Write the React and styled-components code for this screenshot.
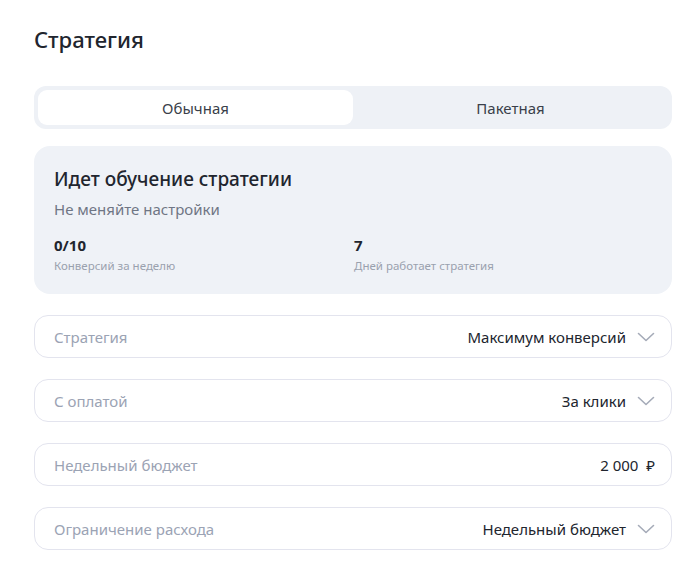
import React from 'react';
import styled, { createGlobalStyle } from 'styled-components';

const Global = createGlobalStyle`
  body {
    margin: 0;
    background: #ffffff;
    font-family: 'Noto Sans', 'Open Sans', sans-serif;
    color: #21252e;
  }
`;

const Page = styled.div`
  width: 699px;
  padding: 24px 27px 0 34px;
  box-sizing: border-box;
`;

const Title = styled.h1`
  margin: 0 0 32px;
  font-size: 22px;
  font-weight: 500;
  line-height: 30px;
  color: #21252e;
`;

const Tabs = styled.div`
  display: grid;
  grid-template-columns: 1fr 1fr;
  padding: 4px;
  background: #eef1f6;
  border-radius: 12px;
  margin-bottom: 17px;
`;

const Tab = styled.div`
  height: 35px;
  display: flex;
  align-items: center;
  justify-content: center;
  font-size: 15px;
  color: #3a3f4a;
  border-radius: 9px;
  background: ${p => (p.active ? '#ffffff' : 'transparent')};
`;

const InfoCard = styled.div`
  background: #eff2f7;
  border-radius: 16px;
  padding: 21px 20px 21px;
  margin-bottom: 21px;
`;

const InfoTitle = styled.div`
  font-size: 19px;
  font-weight: 500;
  line-height: 24px;
  color: #21252e;
`;

const InfoSub = styled.div`
  margin-top: 8px;
  font-size: 15px;
  line-height: 20px;
  color: #6f7685;
`;

const Stats = styled.div`
  display: grid;
  grid-template-columns: 300px 1fr;
  margin-top: 17px;
`;

const StatValue = styled.div`
  font-size: 15px;
  font-weight: 700;
  line-height: 18px;
  color: #21252e;
`;

const StatLabel = styled.div`
  margin-top: 5px;
  font-size: 11.5px;
  line-height: 14px;
  color: #9aa1ae;
`;

const Fields = styled.div`
  display: flex;
  flex-direction: column;
  gap: 21px;
`;

const Field = styled.div`
  height: 43px;
  box-sizing: border-box;
  border: 1px solid #e3e4ee;
  border-radius: 14px;
  display: flex;
  align-items: center;
  justify-content: space-between;
  padding: 0 16px 0 19px;
`;

const Label = styled.span`
  font-size: 15px;
  color: #9ba3b4;
`;

const Value = styled.span`
  display: flex;
  align-items: center;
  gap: 11px;
  font-size: 15px;
  color: #21252e;
  white-space: pre;
`;

const Chevron = () => (
  <svg width="18" height="10" viewBox="0 0 18 10" fill="none">
    <path d="M1.5 1.5 L9 8.5 L16.5 1.5" stroke="#a5abb8" strokeWidth="1.6" strokeLinecap="round" strokeLinejoin="round" />
  </svg>
);

const fields = [
  { label: 'Стратегия', value: 'Максимум конверсий', select: true },
  { label: 'С оплатой', value: 'За клики', select: true },
  { label: 'Недельный бюджет', value: '2 000  ₽', select: false },
  { label: 'Ограничение расхода', value: 'Недельный бюджет', select: true },
];

export default function App() {
  return (
    <Page>
      <Global />
      <Title>Стратегия</Title>
      <Tabs>
        <Tab active>Обычная</Tab>
        <Tab>Пакетная</Tab>
      </Tabs>
      <InfoCard>
        <InfoTitle>Идет обучение стратегии</InfoTitle>
        <InfoSub>Не меняйте настройки</InfoSub>
        <Stats>
          <div>
            <StatValue>0/10</StatValue>
            <StatLabel>Конверсий за неделю</StatLabel>
          </div>
          <div>
            <StatValue>7</StatValue>
            <StatLabel>Дней работает стратегия</StatLabel>
          </div>
        </Stats>
      </InfoCard>
      <Fields>
        {fields.map(f => (
          <Field key={f.label}>
            <Label>{f.label}</Label>
            <Value>
              {f.value}
              {f.select && <Chevron />}
            </Value>
          </Field>
        ))}
      </Fields>
    </Page>
  );
}
